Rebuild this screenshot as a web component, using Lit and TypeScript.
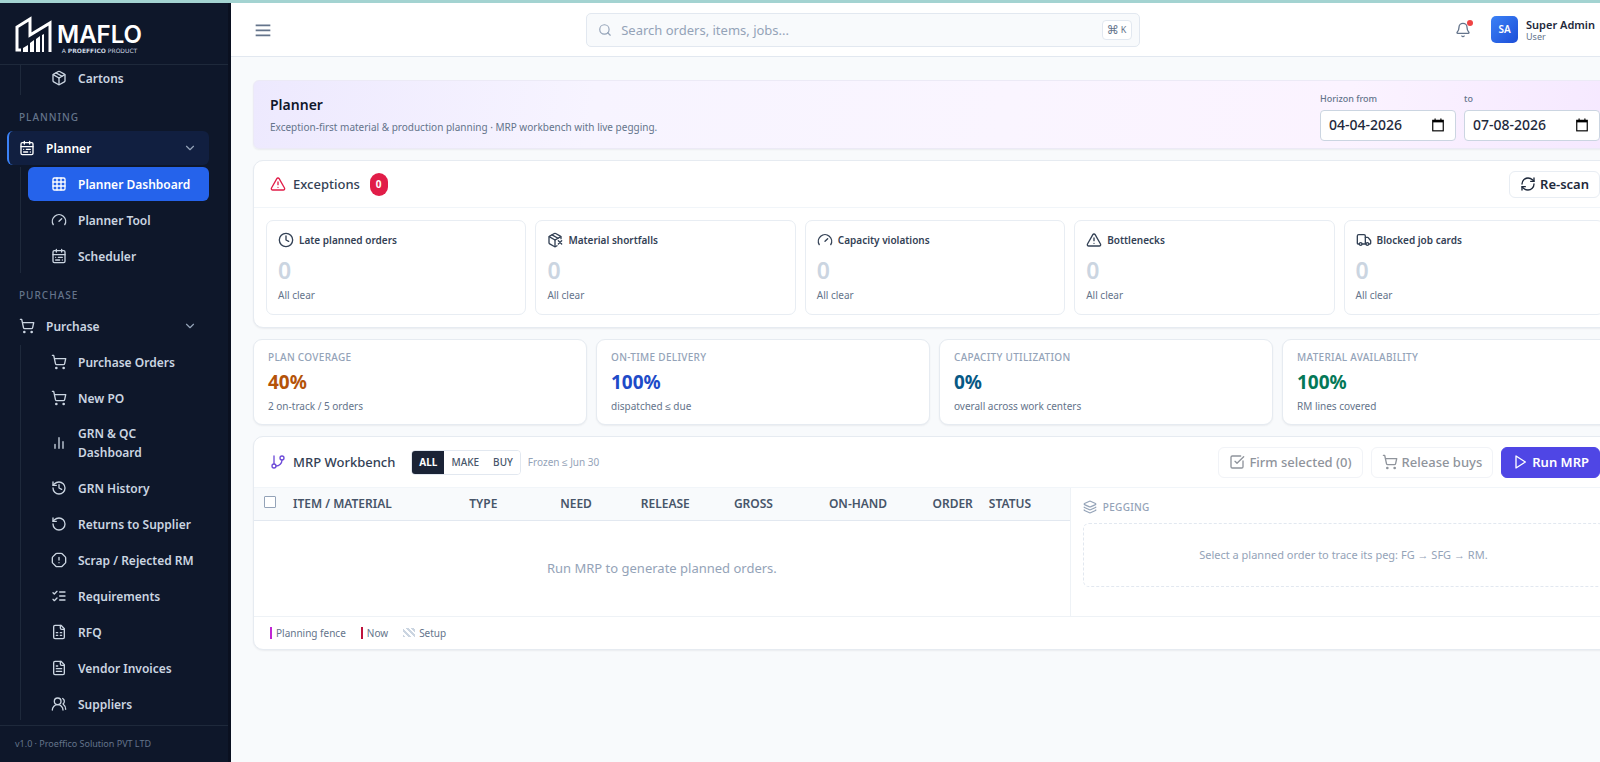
import { LitElement, html, css, svg } from "lit";
import { customElement, property, state } from "lit/decorators.js";
import { classMap } from "lit/directives/class-map.js";

const ICONS: Record<string, unknown> = {
  package: svg`<path d="M11 21.73a2 2 0 0 0 2 0l7-4A2 2 0 0 0 21 16V8a2 2 0 0 0-1-1.73l-7-4a2 2 0 0 0-2 0l-7 4A2 2 0 0 0 3 8v8a2 2 0 0 0 1 1.73z"/><path d="M12 22V12"/><path d="M3.3 7 12 12l8.7-5"/><path d="m7.5 4.27 9 5.15"/>`,
  packageX: svg`<path d="M21 10V8a2 2 0 0 0-1-1.73l-7-4a2 2 0 0 0-2 0l-7 4A2 2 0 0 0 3 8v8a2 2 0 0 0 1 1.73l7 4a2 2 0 0 0 2 0l2-1.14"/><path d="m7.5 4.27 9 5.15"/><path d="M3.29 7 12 12l8.71-5"/><path d="M12 22V12"/><path d="m17 13 5 5m-5 0 5-5"/>`,
  calendar: svg`<rect x="3" y="4" width="18" height="18" rx="2"/><path d="M16 2v4M3 10h18M8 2v4M17 14h-6M13 18H7M7 14h.01M17 18h.01"/>`,
  date: svg`<rect x="3" y="4" width="18" height="18" stroke-linejoin="miter"/><path d="M3 5.500h18" stroke-width="4" stroke-linecap="butt"/><path d="M7 1.500v3M17 1.500v3"/>`,
  grid: svg`<rect x="3" y="3" width="18" height="18" rx="2"/><path d="M3 9h18M3 15h18M9 3v18M15 3v18"/>`,
  gauge: svg`<path d="m12 14 4-4"/><path d="M3.34 19a10 10 0 1 1 17.32 0"/>`,
  cart: svg`<circle cx="8" cy="21" r="1"/><circle cx="19" cy="21" r="1"/><path d="M2.05 2.05h2l2.66 12.42a2 2 0 0 0 2 1.58h9.78a2 2 0 0 0 1.95-1.57l1.65-7.43H5.12"/>`,
  bars: svg`<path d="M18 20V10M12 20V4M6 20v-6"/>`,
  history: svg`<path d="M3 12a9 9 0 1 0 9-9 9.750 9.750 0 0 0-6.740 2.740L3 8"/><path d="M3 3v5h5M12 7v5l4 2"/>`,
  undo: svg`<path d="M3 12a9 9 0 1 0 9-9 9.750 9.750 0 0 0-6.740 2.740L3 8"/><path d="M3 3v5h5"/>`,
  alertOct: svg`<path d="M12 16h.01M12 8v4"/><path d="M15.312 2a2 2 0 0 1 1.414.586l4.688 4.688A2 2 0 0 1 22 8.688v6.624a2 2 0 0 1-.586 1.414l-4.688 4.688a2 2 0 0 1-1.414.586H8.688a2 2 0 0 1-1.414-.586l-4.688-4.688A2 2 0 0 1 2 15.312V8.688a2 2 0 0 1 .586-1.414l4.688-4.688A2 2 0 0 1 8.688 2z"/>`,
  checks: svg`<path d="m3 17 2 2 4-4M3 7l2 2 4-4M13 6h8M13 12h8M13 18h8"/>`,
  sheet: svg`<path d="M15 2H6a2 2 0 0 0-2 2v16a2 2 0 0 0 2 2h12a2 2 0 0 0 2-2V7Z"/><path d="M14 2v4a2 2 0 0 0 2 2h4M8 13h2M14 13h2M8 17h2M14 17h2"/>`,
  file: svg`<path d="M15 2H6a2 2 0 0 0-2 2v16a2 2 0 0 0 2 2h12a2 2 0 0 0 2-2V7Z"/><path d="M14 2v4a2 2 0 0 0 2 2h4M10 9H8M16 13H8M16 17H8"/>`,
  users: svg`<path d="M18 21a8 8 0 0 0-16 0"/><circle cx="10" cy="8" r="5"/><path d="M22 20c0-3.370-2-6.500-4-8a5 5 0 0 0-.45-8.300"/>`,
  chevron: svg`<path d="m6 9 6 6 6-6"/>`,
  menu: svg`<path d="M1 5h22M1 12.500h22M1 20h22" stroke-linecap="butt" stroke-width="2.500"/>`,
  search: svg`<circle cx="11" cy="11" r="8"/><path d="m21 21-4.300-4.300"/>`,
  bell: svg`<path d="M10.268 21a2 2 0 0 0 3.464 0"/><path d="M3.262 15.326A1 1 0 0 0 4 17h16a1 1 0 0 0 .74-1.673C19.410 13.956 18 12.499 18 8A6 6 0 0 0 6 8c0 4.499-1.411 5.956-2.738 7.326"/>`,
  alert: svg`<path d="m21.730 18-8-14a2 2 0 0 0-3.480 0l-8 14A2 2 0 0 0 4 21h16a2 2 0 0 0 1.730-3M12 9v4M12 17h.01"/>`,
  refresh: svg`<path d="M3 12a9 9 0 0 1 9-9 9.750 9.750 0 0 1 6.740 2.740L21 8"/><path d="M21 3v5h-5M21 12a9 9 0 0 1-9 9 9.750 9.750 0 0 1-6.740-2.740L3 16"/><path d="M8 16H3v5"/>`,
  clock: svg`<circle cx="12" cy="12" r="10"/><path d="M12 6v6l4 2"/>`,
  truck: svg`<path d="M14 18V6a2 2 0 0 0-2-2H4a2 2 0 0 0-2 2v11a1 1 0 0 0 1 1h2M15 18H9"/><path d="M19 18h2a1 1 0 0 0 1-1v-3.650a1 1 0 0 0-.22-.624l-3.480-4.350A1 1 0 0 0 17.520 8H14"/><circle cx="17" cy="18" r="2"/><circle cx="7" cy="18" r="2"/>`,
  branch: svg`<path d="M6 3v12"/><circle cx="18" cy="6" r="3"/><circle cx="6" cy="18" r="3"/><path d="M18 9a9 9 0 0 1-9 9"/>`,
  check: svg`<path d="M21 10.500V19a2 2 0 0 1-2 2H5a2 2 0 0 1-2-2V5a2 2 0 0 1 2-2h12.500"/><path d="m9 11 3 3L22 4"/>`,
  play: svg`<path d="m6 3 14 9-14 9z"/>`,
  layers: svg`<path d="M12.830 2.180a2 2 0 0 0-1.660 0L2.600 6.080a1 1 0 0 0 0 1.830l8.580 3.910a2 2 0 0 0 1.660 0l8.580-3.900a1 1 0 0 0 0-1.830z"/><path d="M2 12a1 1 0 0 0 .58.910l8.600 3.910a2 2 0 0 0 1.650 0l8.580-3.900A1 1 0 0 0 22 12M2 17a1 1 0 0 0 .58.910l8.600 3.910a2 2 0 0 0 1.650 0l8.580-3.900A1 1 0 0 0 22 17"/>`,
};

@customElement("ui-icon")
class UiIcon extends LitElement {
  static styles = css`
    :host { display: inline-flex; flex: none; width: 16px; height: 16px; }
    .glyph { width: 100%; height: 100%; fill: none; stroke: currentColor; stroke-width: 2; stroke-linecap: round; stroke-linejoin: round; overflow: visible; }
  `;
  @property() name = "";
  render() {
    return html`<svg class="glyph" viewBox="0 0 24 24" aria-hidden="true">${ICONS[this.name]}</svg>`;
  }
}

type Item = [icon: string, label: string];

@customElement("side-nav")
class SideNav extends LitElement {
  static styles = css`
    :host { display: flex; flex-direction: column; min-height: 0; background: #0e172a; border-right: 3px solid #0a1020; box-sizing: border-box; color: #cbd5e1; }
    .brand { flex: none; height: 62px; box-sizing: border-box; border-bottom: 1px solid #1e293b; display: flex; align-items: center; gap: 5px; padding: 0 15px; color: #fff; }
    .mark { width: 37px; height: 36px; flex: none; }
    .words { display: flex; flex-direction: column; align-items: center; padding-top: 10px; }
    .name { font: 600 24px/24px Inter, sans-serif; }
    .tag { font: 6px/8px "DejaVu Sans", sans-serif; color: #cbd5e1; }
    .nav { flex: 1; min-height: 0; overflow: hidden; padding: 0 19px 0 7px; }
    .tree { list-style: none; margin: 0 0 0 13px; padding: 0 0 0 7px; border-left: 1px solid #1e293b; display: flex; flex-direction: column; gap: 2px; }
    .tree.first { margin-top: -4px; }
    .link { display: flex; align-items: center; gap: 11px; min-height: 34px; box-sizing: border-box; padding: 7px 8px 7px 23px; border-radius: 6px; color: inherit; text-decoration: none; font-size: 12px; line-height: 19px; font-weight: 600; }
    .link.on { background: #2563eb; color: #fff; }
    .label { margin: 0; height: 36px; box-sizing: border-box; padding: 13px 12px 0; font-size: 10px; line-height: 18px; font-weight: 500; letter-spacing: 1px; color: #64748b; }
    .group { display: flex; align-items: center; gap: 11px; width: 100%; height: 34px; margin-bottom: 2px; padding: 0 12px 0 10px; border: 0; border-left: 2px solid transparent; border-radius: 6px; background: none; color: inherit; font: 600 12px/19px "Noto Sans", sans-serif; text-align: left; }
    .group.on { background: #111f40; border-left-color: #3b82f6; color: #fff; }
    .grow { flex: 1; }
    .chev { width: 14px; height: 14px; color: #94a3b8; }
    .foot { flex: none; margin-top: 5px; height: 37px; box-sizing: border-box; border-top: 1px solid #1e293b; padding: 0 15px; font-size: 9px; line-height: 36px; color: #64748b; }
  `;
  private tree(items: Item[], first = false) {
    return html`<ul class=${classMap({ tree: true, first })}>
      ${items.map(([icon, label]) => html`<li><a href="#" class=${classMap({ link: true, on: label === "Planner Dashboard" })}><ui-icon name=${icon}></ui-icon><span>${label}</span></a></li>`)}
    </ul>`;
  }
  private group(icon: string, label: string, on = false) {
    return html`<button type="button" aria-expanded="true" class=${classMap({ group: true, on })}><ui-icon name=${icon}></ui-icon><span class="grow">${label}</span><ui-icon class="chev" name="chevron"></ui-icon></button>`;
  }
  render() {
    return html`
      <div class="brand">
        <svg class="mark" viewBox="0 0 37 36" fill="none" aria-hidden="true">
          <path d="M6 34H2V11L15 3v16L35 7v29" stroke="#fff" stroke-width="3"/>
          <path d="M8 36v-4l5-3v7zM15 36V27l4-3v12zM21 36V23l4-3v16zM27 36V19l2-1v18z" fill="#fff"/>
        </svg>
        <div class="words"><span class="name">MAFLO</span><span class="tag">A <b>PROEFFICO</b> PRODUCT</span></div>
      </div>
      <nav class="nav" aria-label="Main">
        ${this.tree([["package", "Cartons"]], true)}
        <p class="label">PLANNING</p>
        ${this.group("calendar", "Planner", true)}
        ${this.tree([["grid", "Planner Dashboard"], ["gauge", "Planner Tool"], ["calendar", "Scheduler"]])}
        <p class="label">PURCHASE</p>
        ${this.group("cart", "Purchase")}
        ${this.tree([["cart", "Purchase Orders"], ["cart", "New PO"], ["bars", "GRN & QC Dashboard"], ["history", "GRN History"], ["undo", "Returns to Supplier"], ["alertOct", "Scrap / Rejected RM"], ["checks", "Requirements"], ["sheet", "RFQ"], ["file", "Vendor Invoices"], ["users", "Suppliers"]])}
      </nav>
      <div class="foot">v1.0 · Proeffico Solution PVT LTD</div>`;
  }
}

@customElement("app-root")
class AppRoot extends LitElement {
  static styles = css`
    :host { display: grid; grid-template-columns: 231px minmax(0, 1fr); grid-template-rows: minmax(0, 1fr); height: 100vh; box-sizing: border-box; overflow: hidden; border-top: 3px solid #a3d3d1; background: #f8fafc; color: #334155; font: 13px/18px "Noto Sans", sans-serif; }
    .page { margin-right: -16px; min-width: 0; display: flex; flex-direction: column; }
    .top { flex: none; display: grid; grid-template-columns: minmax(0, 331fr) minmax(0, 553fr) minmax(0, 455fr); align-items: center; height: 54px; box-sizing: border-box; padding: 0 21px 0 24px; background: #fff; border-bottom: 1px solid #e2e8f0; }
    .icon-btn { position: relative; display: flex; padding: 0; border: 0; background: none; color: #64748b; }
    .dot { position: absolute; top: -2px; right: -2px; width: 6px; height: 6px; border-radius: 50%; background: #ef4444; }
    .search { display: flex; align-items: center; gap: 9px; height: 34px; box-sizing: border-box; padding: 0 7px 0 11px; border: 1px solid #e2e8f0; border-radius: 5px; background: #f8fafc; color: #94a3b8; }
    .search ui-icon { width: 14px; height: 14px; }
    .search input { flex: 1; min-width: 0; border: 0; padding: 0; background: none; outline: 0; font: 13px/18px "Noto Sans", sans-serif; color: #334155; }
    .search input::placeholder { color: #94a3b8; }
    kbd { width: 30px; height: 20px; box-sizing: border-box; display: flex; align-items: center; justify-content: center; gap: 2px; border: 1px solid #e2e8f0; border-radius: 4px; background: #fff; color: #64748b; font: 9px/18px "Noto Sans", sans-serif; }
    .cmd { font: 12px/18px "DejaVu Sans", sans-serif; }
    .user { display: flex; align-items: center; justify-content: flex-end; gap: 8px; }
    .user .icon-btn { margin-right: 12px; }
    .avatar { width: 27px; height: 27px; border-radius: 5px; background: linear-gradient(135deg, #3b82f6, #1d4ed8); color: #fff; font-size: 10px; line-height: 27px; font-weight: 600; text-align: center; }
    .who { display: flex; flex-direction: column; padding-top: 2px; font-size: 11px; line-height: 13px; font-weight: 600; color: #1e293b; }
    .who small { font-size: 9px; line-height: 12px; font-weight: 400; color: #64748b; }
    main { padding: 23px 0 24px 22px; display: flex; flex-direction: column; gap: 11px; }
    .panel { background: #fff; border: 1px solid #e6ebf1; border-radius: 10px; box-shadow: 0 1px 2px rgba(15, 23, 42, .06); }
    .hero { display: flex; align-items: center; justify-content: space-between; height: 69px; box-sizing: border-box; padding: 1px 15px 0 16px; border-radius: 6px; border-color: #eceaf6; background: linear-gradient(100deg, #ede9fe, #f7f4ff 25%, #faf5ff 55%, #fbf3ff 80%, #f5e8ff); }
    h1 { margin: 0 0 3px; font-size: 14px; line-height: 20px; font-weight: 600; color: #0f172a; }
    .sub { margin: 0; font-size: 10px; line-height: 18px; color: #64748b; }
    .range { display: flex; gap: 8px; }
    .field { display: flex; flex-direction: column; gap: 3px; padding-top: 1px; font-size: 9px; line-height: 16px; font-weight: 500; color: #64748b; }
    .date { display: flex; align-items: center; width: 136px; height: 31px; box-sizing: border-box; padding: 0 10px 0 8px; border: 1px solid #cbd5e1; border-radius: 4px; background: #fff; color: #0f172a; }
    .date input { flex: 1; min-width: 0; border: 0; padding: 0; background: none; outline: 0; font: 500 14px/18px "Noto Sans", sans-serif; color: #1e293b; }
    .date ui-icon { width: 14px; height: 14px; color: #000; }
    .head { display: flex; align-items: center; gap: 7px; box-sizing: border-box; padding: 0 15px 0 16px; border-bottom: 1px solid #f1f5f9; }
    .head.ex { height: 47px; }
    .head.mrp { height: 51px; }
    h2 { margin: 0; font-size: 13px; line-height: 20px; font-weight: 500; color: #334155; }
    .push { margin-left: auto; }
    .actions { display: flex; gap: 8px; }
    .badge { margin-left: 3px; padding: 0 6px; border-radius: 9px; background: #e11d48; color: #fff; font-size: 10px; line-height: 23px; font-weight: 700; }
    .rose { color: #e11d48; }
    .violet { color: #6d4bd8; }
    .btn { display: inline-flex; align-items: center; gap: 4px; height: 31px; padding: 0 10px; border: 1px solid #e8edf3; border-radius: 6px; background: #fff; color: #1e293b; font: 500 13px/18px "Noto Sans", sans-serif; }
    .btn.small { height: 27px; font-weight: 600; }
    .btn:disabled { color: #8f949c; border-color: #f1f3f7; }
    .btn.primary { background: #4f46e5; border-color: #4f46e5; color: #fff; font-weight: 600; }
    .cards { display: grid; grid-template-columns: repeat(5, minmax(0, 1fr)); gap: 9px; padding: 12px 11px 12px 12px; }
    .card { padding: 9px 11px; border: 1px solid #e8edf3; border-radius: 7px; height: 95px; box-sizing: border-box; }
    .card h3 { display: flex; align-items: center; gap: 5px; margin: 0; font-size: 10px; line-height: 20px; font-weight: 600; color: #334155; }
    .card p, .kpi p { margin: 0; }
    .card .zero { padding: 6px 0 3px; font-size: 23px; line-height: 28px; font-weight: 600; color: #cbd5e1; }
    .card .note, .kpi .note { font-size: 10px; line-height: 16px; color: #64748b; }
    .kpis { display: grid; grid-template-columns: repeat(4, minmax(0, 1fr)); gap: 9px; }
    .kpi { height: 86px; box-sizing: border-box; padding: 8px 14px; border-radius: 9px; }
    .kpi h3 { margin: 0; font-size: 10px; line-height: 18px; font-weight: 500; letter-spacing: .3px; color: #94a3b8; }
    .kpi .val { padding: 3px 0; font-size: 19px; line-height: 26px; font-weight: 700; }
    .amber { color: #b45309; } .blue { color: #1e4bc8; } .sky { color: #075985; } .green { color: #047857; }
    .seg { display: flex; margin-left: 9px; height: 25px; box-sizing: border-box; border: 1px solid #e2e8f0; border-radius: 4px; overflow: hidden; }
    .seg button { border: 0; padding: 0 7px; background: #fff; color: #475569; font: 500 10px/23px "Noto Sans", sans-serif; }
    .seg button.on { background: #1a2336; color: #fff; font-weight: 700; }
    .frozen { font-size: 10px; color: #94a3b8; }
    .split { display: grid; grid-template-columns: minmax(0, 817fr) minmax(0, 546fr); border-bottom: 1px solid #eef2f6; }
    table { width: 100%; border-collapse: collapse; table-layout: fixed; }
    th { height: 32px; box-sizing: border-box; padding: 0 8px; background: #f8fafc; border-bottom: 1px solid #e2e8f0; font-size: 12px; line-height: 16px; font-weight: 600; text-align: right; color: #475569; }
    th.l { text-align: left; }
    th.pick { padding: 0 0 3px 10px; line-height: 0; }
    th.pick input { appearance: none; width: 12px; height: 12px; margin: 0; border: 1px solid #94a3b8; border-radius: 1px; background: #fff; }
    td { height: 95px; padding: 0; text-align: center; color: #94a3b8; }
    .c0 { width: 3.8%; } .c1 { width: 21.6%; } .c2 { width: 6.4%; } .c3 { width: 10.6%; } .c4 { width: 12%; } .c5 { width: 10.2%; } .c6 { width: 14%; } .c7 { width: 10.5%; }
    .peg { border-left: 1px solid #eef2f6; padding: 11px 11px 10px 12px; }
    .peg h3 { display: flex; align-items: center; gap: 6px; margin: 0 0 8px; font-size: 10px; line-height: 16px; font-weight: 500; color: #94a3b8; letter-spacing: .3px; }
    .peg ui-icon { width: 14px; height: 14px; }
    .hint { margin: 0; border: 1px dashed #e2e8f0; border-radius: 6px; font-size: 11px; line-height: 62px; text-align: center; color: #94a3b8; }
    .legend { display: flex; align-items: center; gap: 15px; height: 32px; padding: 0 16px; font-size: 10px; color: #64748b; }
    .legend span { display: flex; align-items: center; gap: 4px; }
    .tick { width: 2px; height: 12px; background: #c026d3; }
    .tick.now { background: #be123c; }
    .tick.setup { width: 12px; height: 9px; background: repeating-linear-gradient(45deg, #cbd5e1 0 2px, #fff 2px 4px); }
  `;
  @state() private kind = "ALL";
  render() {
    const ex: Item[] = [["clock", "Late planned orders"], ["packageX", "Material shortfalls"], ["gauge", "Capacity violations"], ["alert", "Bottlenecks"], ["truck", "Blocked job cards"]];
    const kpis = [["PLAN COVERAGE", "40%", "2 on-track / 5 orders", "amber"], ["ON-TIME DELIVERY", "100%", "dispatched ≤ due", "blue"], ["CAPACITY UTILIZATION", "0%", "overall across work centers", "sky"], ["MATERIAL AVAILABILITY", "100%", "RM lines covered", "green"]];
    return html`
      <side-nav></side-nav>
      <div class="page">
        <header class="top">
          <div><button class="icon-btn" type="button" aria-label="Menu"><ui-icon name="menu"></ui-icon></button></div>
          <div class="search"><ui-icon name="search"></ui-icon><input type="text" aria-label="Search" placeholder="Search orders, items, jobs..."><kbd><span class="cmd">⌘</span>K</kbd></div>
          <div class="user">
            <button class="icon-btn" type="button" aria-label="Notifications"><ui-icon name="bell"></ui-icon><span class="dot"></span></button>
            <span class="avatar">SA</span><span class="who">Super Admin<small>User</small></span>
          </div>
        </header>
        <main>
          <section class="panel hero">
            <div><h1>Planner</h1><p class="sub">Exception-first material &amp; production planning · MRP workbench with live pegging.</p></div>
            <div class="range">
              <label class="field">Horizon from<span class="date"><input type="text" .value=${"04-04-2026"}><ui-icon name="date"></ui-icon></span></label>
              <label class="field">to<span class="date"><input type="text" .value=${"07-08-2026"}><ui-icon name="date"></ui-icon></span></label>
            </div>
          </section>
          <section class="panel">
            <div class="head ex"><ui-icon class="rose" name="alert"></ui-icon><h2>Exceptions</h2><span class="badge">0</span><button class="btn small push" type="button"><ui-icon name="refresh"></ui-icon>Re-scan</button></div>
            <div class="cards">${ex.map(([i, t]) => html`<article class="card"><h3><ui-icon name=${i}></ui-icon>${t}</h3><p class="zero">0</p><p class="note">All clear</p></article>`)}</div>
          </section>
          <section class="kpis">${kpis.map(([t, v, n, c]) => html`<article class="panel kpi"><h3>${t}</h3><p class="val ${c}">${v}</p><p class="note">${n}</p></article>`)}</section>
          <section class="panel">
            <div class="head mrp">
              <ui-icon class="violet" name="branch"></ui-icon><h2>MRP Workbench</h2>
              <div class="seg" role="group" aria-label="Order kind">${["ALL", "MAKE", "BUY"].map((k) => html`<button type="button" class=${classMap({ on: k === this.kind })} @click=${() => (this.kind = k)}>${k}</button>`)}</div>
              <span class="frozen">Frozen ≤ Jun 30</span>
              <div class="actions push">
                <button class="btn" type="button" disabled><ui-icon name="check"></ui-icon>Firm selected (0)</button>
                <button class="btn" type="button" disabled><ui-icon name="cart"></ui-icon>Release buys</button>
                <button class="btn primary" type="button"><ui-icon name="play"></ui-icon>Run MRP</button>
              </div>
            </div>
            <div class="split">
              <table>
                <thead><tr>
                  <th class="pick l c0"><input type="checkbox" aria-label="Select all"></th>
                  <th class="l c1">ITEM / MATERIAL</th><th class="l c2">TYPE</th><th class="c3">NEED</th><th class="c4">RELEASE</th><th class="c5">GROSS</th><th class="c6">ON-HAND</th><th class="c7">ORDER</th><th class="l">STATUS</th>
                </tr></thead>
                <tbody><tr><td colspan="9">Run MRP to generate planned orders.</td></tr></tbody>
              </table>
              <aside class="peg"><h3><ui-icon name="layers"></ui-icon>PEGGING</h3><p class="hint">Select a planned order to trace its peg: FG → SFG → RM.</p></aside>
            </div>
            <div class="legend"><span><i class="tick"></i>Planning fence</span><span><i class="tick now"></i>Now</span><span><i class="tick setup"></i>Setup</span></div>
          </section>
        </main>
      </div>`;
  }
}
